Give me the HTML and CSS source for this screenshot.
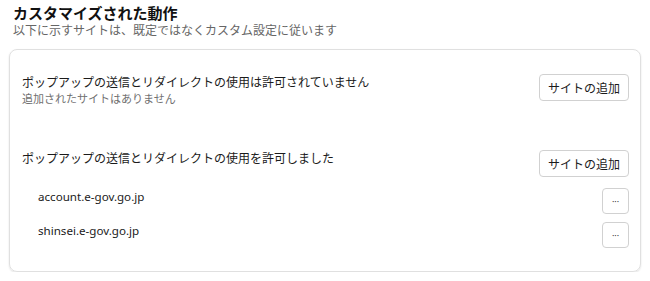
FILE: index.html
```html
<!DOCTYPE html>
<html lang="ja">
<head>
  <meta charset="UTF-8">
  <title>カスタマイズされた動作</title>
  <link rel="stylesheet" href="styles.css">
</head>
<body>
  <div class="section-header">
    <div class="section-title">カスタマイズされた動作</div>
    <div class="section-subtitle">以下に示すサイトは、既定ではなくカスタム設定に従います</div>
  </div>

  <div class="card">
    <div class="group">
      <div class="group-row">
        <div class="group-info">
          <div class="group-title">ポップアップの送信とリダイレクトの使用は許可されていません</div>
          <div class="group-note">追加されたサイトはありません</div>
        </div>
        <button class="add-button">サイトの追加</button>
      </div>
    </div>

    <div class="group">
      <div class="group-row">
        <div class="group-info">
          <div class="group-title">ポップアップの送信とリダイレクトの使用を許可しました</div>
        </div>
        <button class="add-button">サイトの追加</button>
      </div>
      <div class="site-list">
        <div class="site-item">
          <span class="site-name">account.e-gov.go.jp</span>
          <button class="more-button">···</button>
        </div>
        <div class="site-item">
          <span class="site-name">shinsei.e-gov.go.jp</span>
          <button class="more-button">···</button>
        </div>
      </div>
    </div>
  </div>
</body>
</html>
```

FILE: styles.css
```css
body {
  font-family: "Noto Sans", "Noto Sans CJK JP", sans-serif;
  margin: 0;
  padding: 0;
  width: 650px;
  background-color: #ffffff;
  color: #1b1b1b;
}

.section-header {
  padding: 4px 13px 0 13px;
}

.section-title {
  font-size: 15px;
  font-weight: 700;
  line-height: 18px;
  color: #111111;
}

.section-subtitle {
  font-size: 12px;
  line-height: 18px;
  color: #666666;
}

.card {
  margin: 9px 9px 0 9px;
  width: 632px;
  box-sizing: border-box;
  border: 1px solid #e0e0e0;
  border-radius: 8px;
  box-shadow: 0 1px 2px rgba(0, 0, 0, 0.12);
  padding: 24px 11px 23px 12px;
}

.group + .group {
  margin-top: 43px;
}

.group-row {
  display: flex;
  justify-content: space-between;
  align-items: flex-start;
}

.group-title {
  font-size: 12px;
  line-height: 17px;
  color: #1b1b1b;
}

.group-note {
  font-size: 11px;
  line-height: 16px;
  color: #707070;
}

.add-button {
  font-family: inherit;
  font-size: 12px;
  color: #1b1b1b;
  background-color: #ffffff;
  border: 1px solid #d1d1d1;
  border-radius: 4px;
  height: 27px;
  padding: 0 8px;
  cursor: pointer;
}

.site-list {
  margin-top: 11px;
  display: flex;
  flex-direction: column;
  gap: 8px;
}

.site-item {
  display: flex;
  justify-content: space-between;
  align-items: flex-start;
  padding-left: 16px;
}

.site-name {
  font-size: 11.6px;
  line-height: 18px;
  color: #1b1b1b;
}

.more-button {
  font-family: inherit;
  font-size: 9px;
  color: #444444;
  background-color: #ffffff;
  border: 1px solid #d1d1d1;
  border-radius: 4px;
  width: 27px;
  height: 26px;
  padding: 0;
  cursor: pointer;
}
```
